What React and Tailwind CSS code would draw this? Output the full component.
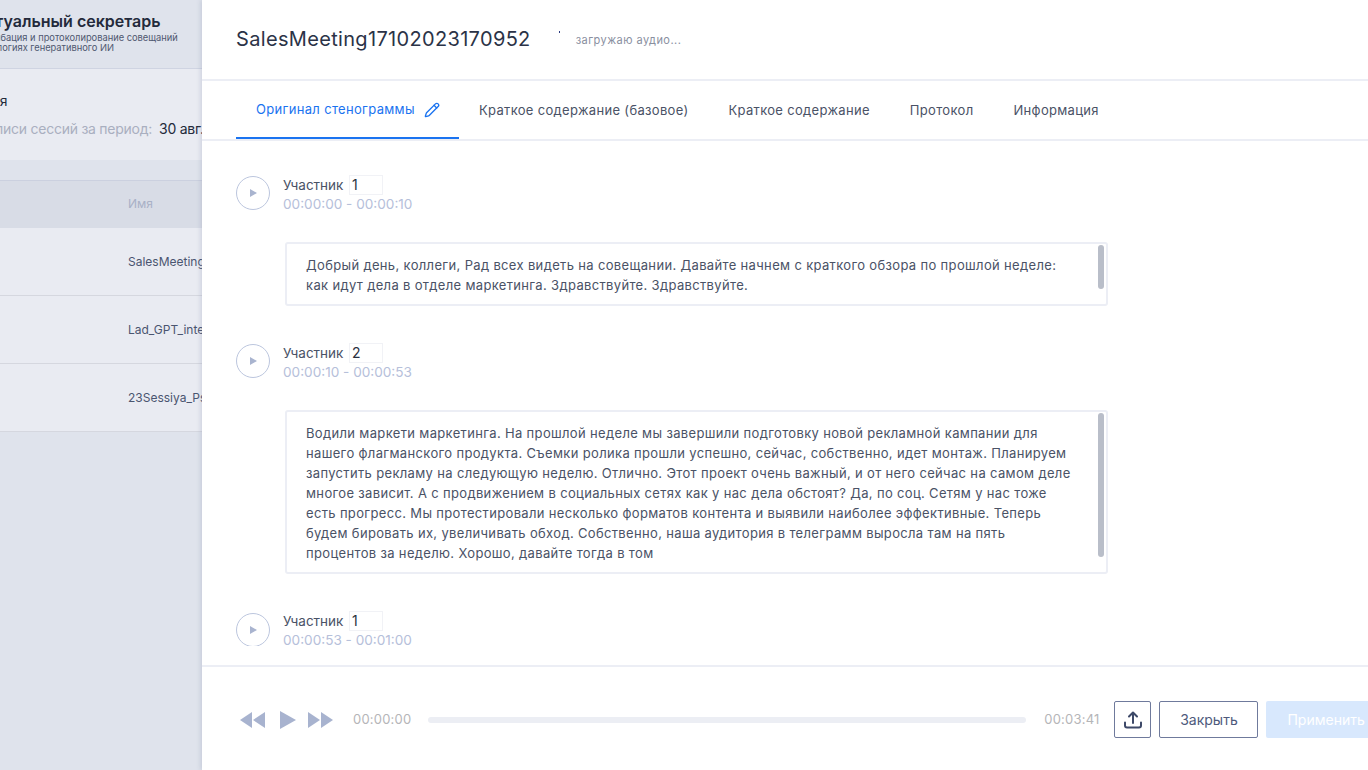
import { Pencil } from 'lucide-react';

const TABS = [
  { label: 'Краткое содержание (базовое)', className: 'ml-5' },
  { label: 'Краткое содержание', className: 'ml-10' },
  { label: 'Протокол', className: 'ml-10' },
  { label: 'Информация', className: 'ml-10' },
];

const ROWS = ['SalesMeeting17102023170952', 'Lad_GPT_interview', '23Sessiya_Psychology'];

const ENTRIES = [
  {
    speaker: '1',
    time: '00:00:00 - 00:00:10',
    barHeight: 'h-[44px]',
    text: 'Добрый день, коллеги, Рад всех видеть на совещании. Давайте начнем с краткого обзора по прошлой неделе: как идут дела в отделе маркетинга. Здравствуйте. Здравствуйте.',
  },
  {
    speaker: '2',
    time: '00:00:10 - 00:00:53',
    barHeight: 'h-[144px]',
    text: 'Водили маркети маркетинга. На прошлой неделе мы завершили подготовку новой рекламной кампании для нашего флагманского продукта. Съемки ролика прошли успешно, сейчас, собственно, идет монтаж. Планируем запустить рекламу на следующую неделю. Отлично. Этот проект очень важный, и от него сейчас на самом деле многое зависит. А с продвижением в социальных сетях как у нас дела обстоят? Да, по соц. Сетям у нас тоже есть прогресс. Мы протестировали несколько форматов контента и выявили наиболее эффективные. Теперь будем бировать их, увеличивать обход. Собственно, наша аудитория в телеграмм выросла там на пять процентов за неделю. Хорошо, давайте тогда в том',
  },
];

const PlayCircle = () => (
  <div className="w-[34px] h-[34px] rounded-full border border-[#bcc6de] flex items-center justify-center shrink-0">
    <svg width="7" height="8" viewBox="0 0 7 8" className="fill-[#a9b4cf] ml-px">
      <path d="M0 0l7 4-7 4z" />
    </svg>
  </div>
);

const SpeakerHead = ({ speaker, time, circleTop = 'mt-[2px]' }) => (
  <div className="flex items-start">
    <div className={circleTop}>
      <PlayCircle />
    </div>
    <div className="ml-[13px]">
      <div className="flex items-center h-5 mt-px text-[13.5px] text-[#4a5266]">
        <span className="w-[66px]">Участник</span>
        <span className="w-[34px] h-5 border border-[#f1f2f6] pl-[2px] text-sm leading-[18px] text-[#2b3040]">{speaker}</span>
      </div>
      <div className="text-[13.6px] leading-[18px] text-[#b6c0da]">{time}</div>
    </div>
  </div>
);

const Entry = ({ speaker, time, text, barHeight }) => (
  <div className="mb-9">
    <SpeakerHead speaker={speaker} time={time} />
    <div className="relative ml-[49px] mt-[29px] w-[823px] border-2 border-[#eceef5] rounded-[3px] pl-[19px] pr-[28px] pt-[11px] pb-[9px] text-[13px] leading-[20px] tracking-[0.34px] text-[#4a5266]">
      {text}
      <div className={`absolute right-[2px] top-[1px] w-[6px] rounded-[3px] bg-[#b9bec9] ${barHeight}`} />
    </div>
  </div>
);

const Sidebar = () => (
  <aside className="w-[202px] shrink-0 overflow-hidden bg-[#dfe3ec] whitespace-nowrap">
    <div className="h-[69px] border-b border-[#cfd4e2] pt-[11px]">
      <div className="ml-[-35px] text-base leading-5 font-semibold text-[#232a3b]">Виртуальный секретарь</div>
      <div className="ml-[-43px] mt-[2px] text-[9.3px] leading-[10px] text-[#4f5870]">Транскрибация и протоколирование совещаний</div>
      <div className="ml-[-42px] text-[9.3px] leading-[10px] text-[#4f5870]">на технологиях генеративного ИИ</div>
    </div>
    <div className="h-[91px] bg-[#e9ebf2] pt-[22px]">
      <div className="ml-[-43px] text-sm leading-5 text-[#232a3b]">Сессия</div>
      <div className="ml-[-21px] mt-[8px] text-sm leading-5 tracking-[-0.25px] text-[#a9afc0]">
        Записи сессий за период:<span className="ml-[7px] text-[#232a3b]">30 авг. 2023</span>
      </div>
    </div>
    <div className="h-5" />
    <div className="h-[48px] bg-[#d8dce6] border-t border-[#cbd0df] pl-[128px] pb-[2px] flex items-center text-xs text-[#a9b1c6]">Имя</div>
    {ROWS.map((name) => (
      <div key={name} className="h-[68px] bg-[#e9ebf2] border-b border-[#d5d7df] pl-[128px] flex items-center text-xs text-[#4a5570]">
        {name}
      </div>
    ))}
  </aside>
);

const Footer = () => (
  <footer className="h-[105px] border-t-2 border-[#eceef5] flex items-center pl-[38px] pt-[2px] whitespace-nowrap shrink-0">
    <svg width="98" height="18" viewBox="0 0 98 18" className="fill-[#a8b3cf] shrink-0">
      <path d="M0 9l12-8v16z" />
      <path d="M13 9l12-8v16z" />
      <path d="M40 0l16 9-16 9z" />
      <path d="M68 1l12 8-12 8z" />
      <path d="M81 1l12 8-12 8z" />
    </svg>
    <span className="ml-[15px] text-[13px] text-[#b5b5b8] tracking-[0.2px]">00:00:00</span>
    <div className="ml-[17px] w-[598px] h-[6px] rounded-full bg-[#eceef4] shrink-0" />
    <span className="ml-[18px] text-[13px] text-[#b5b5b8] tracking-[0.2px]">00:03:41</span>
    <button className="ml-[15px] w-[37px] h-[37px] border border-[#6f7a9c] rounded-[2px] flex items-center justify-center shrink-0">
      <svg width="18" height="18" viewBox="0 0 18 18" fill="none" stroke="#3d4968" strokeWidth="2" strokeLinecap="round" strokeLinejoin="round">
        <path d="M9 12V1.5M5 5.5l4-4 4 4" />
        <path d="M1 11.5v3a2 2 0 0 0 2 2h12a2 2 0 0 0 2-2v-3" />
      </svg>
    </button>
    <button className="ml-2 w-[99px] h-[37px] border border-[#6f7a9c] rounded-[2px] text-sm text-[#4e5a7c] shrink-0">Закрыть</button>
    <button className="ml-2 w-[180px] h-[37px] rounded-[2px] bg-[#d8e8fd] text-sm text-white text-left pl-[21px] shrink-0">Применить изменения</button>
  </footer>
);

export default function App() {
  return (
    <div className="h-[770px] w-[1368px] overflow-hidden flex bg-white font-['Inter',sans-serif]">
      <Sidebar />
      <main className="flex-1 min-w-0 flex flex-col overflow-hidden shadow-[-2px_0_4px_rgba(120,130,160,0.2)]">
        <header className="h-[81px] border-b-2 border-[#eceef5] flex items-center pl-[34px] shrink-0 whitespace-nowrap">
          <h1 className="text-[20px] leading-7 text-[#2b3347] tracking-[0.33px] mt-[-2px]">SalesMeeting17102023170952</h1>
          <span className="ml-[28px] w-px h-[2px] mb-[16px] bg-[#2b3a80]" />
          <span className="ml-4 mt-[2px] text-[11px] text-[#8a8f9f] tracking-[0.45px]">загружаю аудио...</span>
        </header>

        <nav className="h-[60px] border-b-2 border-[#eceef5] flex items-stretch pl-[34px] shrink-0 whitespace-nowrap text-[13px] text-[#4a5266] tracking-[0.32px]">
          <div className="w-[223px] h-[58px] border-b-2 border-[#1a73f0] pl-5 pt-[2px] flex items-center gap-[9px] text-[#1a73f0]">
            Оригинал стенограммы
            <Pencil size={16} strokeWidth={2} />
          </div>
          {TABS.map((tab) => (
            <div key={tab.label} className={`flex items-center pt-[2px] ${tab.className}`}>{tab.label}</div>
          ))}
        </nav>

        <section className="flex-1 min-h-0 overflow-hidden pl-[34px] pt-[33px] mb-[19px]">
          {ENTRIES.map((entry) => (
            <Entry key={entry.speaker} {...entry} />
          ))}
          <SpeakerHead speaker="1" time="00:00:53 - 00:01:00" circleTop="mt-[3px]" />
        </section>

        <Footer />
      </main>
    </div>
  );
}
